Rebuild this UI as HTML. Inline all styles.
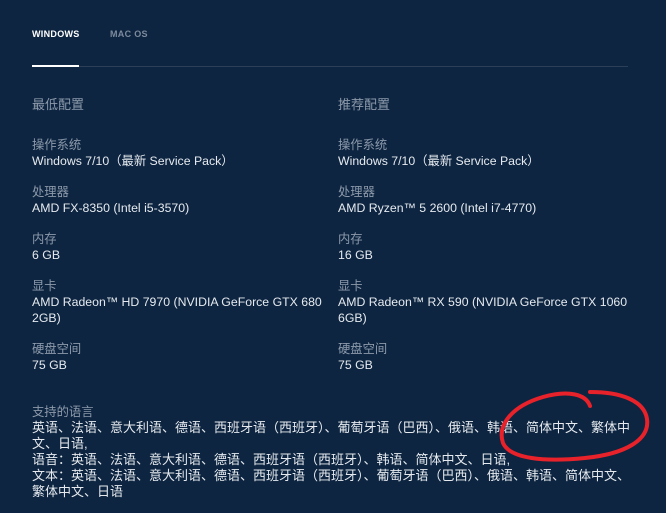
<!DOCTYPE html>
<html><head><meta charset="utf-8"><style>
*{margin:0;padding:0}
body{width:666px;height:513px;background:#0d2541;font-family:"Liberation Sans","Noto Sans CJK SC",sans-serif;position:relative;overflow:hidden;color:#e6eaef}
.a{position:absolute;white-space:nowrap;font-size:12.3px;line-height:16px}
.l{color:#8d9aab}
.c{font-size:13px}
.t{font-size:9px;font-weight:bold;letter-spacing:.3px}
</style></head><body>
<div class="a t" style="left:32px;top:26px;color:#fff">WINDOWS</div>
<div class="a t" style="left:110px;top:26px;color:#7d8a9c">MAC OS</div>
<div style="position:absolute;left:32px;top:66px;width:596px;height:1px;background:#2b3f58"></div>
<div style="position:absolute;left:32px;top:65px;width:47px;height:2px;background:#fff"></div>

<div class="a l" style="left:32px;top:97px;font-size:13px">最低配置</div>
<div class="a l" style="left:32px;top:137px">操作系统</div>
<div class="a" style="left:32px;top:153px">Windows 7/10（最新 Service Pack）</div>
<div class="a l" style="left:32px;top:184px">处理器</div>
<div class="a" style="left:32px;top:200px">AMD FX-8350 (Intel i5-3570)</div>
<div class="a l" style="left:32px;top:231px">内存</div>
<div class="a" style="left:32px;top:247px">6 GB</div>
<div class="a l" style="left:32px;top:278px">显卡</div>
<div class="a" style="left:32px;top:294px">AMD Radeon™ HD 7970 (NVIDIA GeForce GTX 680</div>
<div class="a" style="left:32px;top:310px">2GB)</div>
<div class="a l" style="left:32px;top:341px">硬盘空间</div>
<div class="a" style="left:32px;top:357px">75 GB</div>

<div class="a l" style="left:338px;top:97px;font-size:13px">推荐配置</div>
<div class="a l" style="left:338px;top:137px">操作系统</div>
<div class="a" style="left:338px;top:153px">Windows 7/10（最新 Service Pack）</div>
<div class="a l" style="left:338px;top:184px">处理器</div>
<div class="a" style="left:338px;top:200px">AMD Ryzen™ 5 2600 (Intel i7-4770)</div>
<div class="a l" style="left:338px;top:231px">内存</div>
<div class="a" style="left:338px;top:247px">16 GB</div>
<div class="a l" style="left:338px;top:278px">显卡</div>
<div class="a" style="left:338px;top:294px">AMD Radeon™ RX 590 (NVIDIA GeForce GTX 1060</div>
<div class="a" style="left:338px;top:310px">6GB)</div>
<div class="a l" style="left:338px;top:341px">硬盘空间</div>
<div class="a" style="left:338px;top:357px">75 GB</div>

<div class="a l" style="left:32px;top:404px">支持的语言</div>
<div class="a c" style="left:32px;top:420px">英语、法语、意大利语、德语、西班牙语（西班牙）、葡萄牙语（巴西）、俄语、韩语、简体中文、繁体中</div>
<div class="a c" style="left:32px;top:436px">文、日语,</div>
<div class="a c" style="left:32px;top:452px">语音：英语、法语、意大利语、德语、西班牙语（西班牙）、韩语、简体中文、日语,</div>
<div class="a c" style="left:32px;top:468px">文本：英语、法语、意大利语、德语、西班牙语（西班牙）、葡萄牙语（巴西）、俄语、韩语、简体中文、</div>
<div class="a c" style="left:32px;top:484px">繁体中文、日语</div>

<svg style="position:absolute;left:0;top:0" width="666" height="513">
<path d="M590 406 C586 394 568 390 543 397 C512 406 497 425 503 443 C510 459 545 462 585 458 C625 454 650 440 647 419 C644 400 620 392 590 392" fill="none" stroke="#e8222a" stroke-width="4" stroke-linecap="round"/>
</svg>
</body></html>
